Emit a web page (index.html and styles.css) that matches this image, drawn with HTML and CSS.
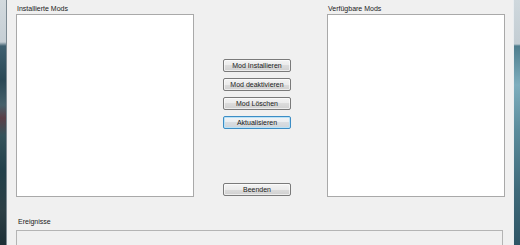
FILE: index.html
```html
<!DOCTYPE html>
<html lang="de">
<head>
    <meta charset="UTF-8">
    <title>Mod Manager</title>
    <link rel="stylesheet" href="styles.css">
</head>
<body>
    <div class="window">
        <div class="frame frame-left"></div>
        <div class="client">
            <div class="main">
                <div class="list-col">
                    <div class="label">Installierte Mods</div>
                    <div class="listbox"></div>
                </div>
                <div class="button-col">
                    <button class="btn">Mod Installieren</button>
                    <button class="btn">Mod deaktivieren</button>
                    <button class="btn">Mod Löschen</button>
                    <button class="btn btn-focus">Aktualisieren</button>
                    <button class="btn btn-close">Beenden</button>
                </div>
                <div class="list-col">
                    <div class="label">Verfügbare Mods</div>
                    <div class="listbox"></div>
                </div>
            </div>
            <div class="events">
                <div class="label">Ereignisse</div>
                <div class="event-box"></div>
            </div>
        </div>
        <div class="frame frame-right"></div>
    </div>
</body>
</html>
```

FILE: styles.css
```css
html, body {
    margin: 0;
    padding: 0;
    width: 520px;
    height: 245px;
    overflow: hidden;
    background-color: #f0f0f0;
}
body {
    font-family: 'Liberation Sans', Arial, sans-serif;
    font-size: 7px;
    color: #1a1a1a;
}
.window {
    display: flex;
    height: 245px;
}
.frame {
    flex: none;
}
.frame-left {
    width: 6px;
    border-right: 1px solid #7d8a92;
    background: linear-gradient(to bottom,
        #d3dade 0px, #c6cfd5 42px,
        #3f6070 46px, #2a4855 80px,
        #45606a 105px, #5a3e46 118px,
        #34525a 135px, #22404a 170px,
        #2c3f45 210px, #1d2f36 245px);
}
.frame-right {
    width: 6px;
    border-left: 1px solid #e9edf0;
    background: linear-gradient(to bottom,
        #cfd8dd 0px, #c3cdd3 44px,
        #4e7d8d 46px, #7eaebe 85px,
        #5b8c9c 130px, #3f6a7a 190px,
        #2f5565 245px);
}
.client {
    flex: 1;
    padding: 4px 8px 0 9px;
}
.main {
    display: flex;
}
.label {
    height: 9px;
    line-height: 9px;
    padding-left: 1px;
    margin-bottom: 1px;
    white-space: nowrap;
}
.list-col {
    width: 178px;
}
.listbox {
    height: 181px;
    background-color: #fff;
    border: 1px solid #a9a9a9;
}
.button-col {
    display: flex;
    flex-direction: column;
    gap: 6px;
    width: 68px;
    margin: 55px 36px 0 29px;
}
.btn {
    display: block;
    width: 68px;
    height: 13px;
    padding: 0;
    font-family: inherit;
    font-size: 7px;
    line-height: 11px;
    color: #1a1a1a;
    border: 1px solid #7a7a7a;
    border-radius: 2px;
    background: linear-gradient(to bottom, #f3f3f3 0%, #ebebeb 50%, #dcdcdc 50%, #d0d0d0 100%);
    box-shadow: inset 0 0 0 1px rgba(255,255,255,0.6);
}
.btn-focus {
    border-color: #3c8dc5;
    box-shadow: inset 0 0 0 1px #b9e2f7;
    background: linear-gradient(to bottom, #f2f4f6 0%, #e9ecef 50%, #d9dde1 50%, #cfd4d9 100%);
}
.btn-close {
    margin-top: 48px;
}
.events {
    margin-top: 20px;
}
.events .label {
    padding-left: 2px;
    margin-bottom: 4px;
}
.event-box {
    width: 485px;
    height: 14px;
    border: 1px solid #b4b4b4;
    border-bottom: none;
    background-color: #f0f0f0;
}
```
